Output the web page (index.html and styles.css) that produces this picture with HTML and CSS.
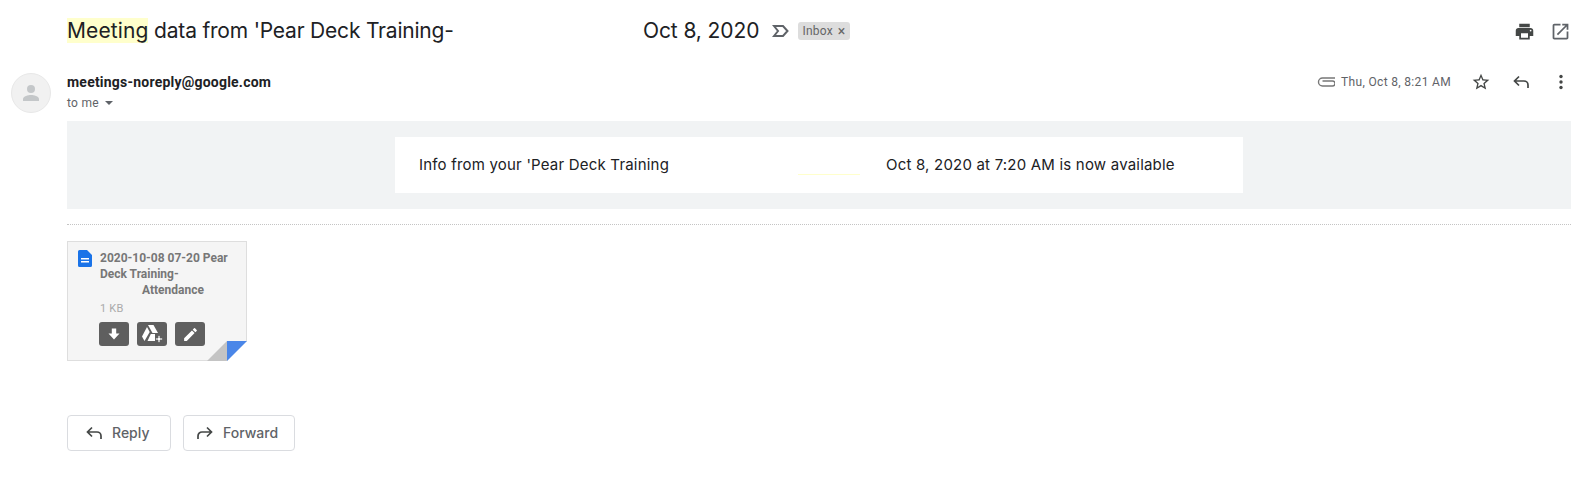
FILE: index.html
```html
<!DOCTYPE html>
<html lang="en">
<head>
<meta charset="utf-8">
<title>Meeting data</title>
<link rel="stylesheet" href="styles.css">
</head>
<body>
<header class="subject">
  <h1 class="subject-text"><mark class="hl">Meeting</mark> data from 'Pear Deck Training-</h1>
  <span class="subject-date">Oct 8, 2020</span>
  <svg class="label-icon" width="18" height="14" viewBox="0 0 18 14"><path d="M2 2h9l4.500 5L11 12H2l4-5z" fill="none" stroke="#5f6368" stroke-width="2"/></svg>
  <span class="chip">Inbox <span class="chip-x">×</span></span>
  <span class="subject-actions">
    <svg width="21" height="21" viewBox="0 0 24 24"><path fill="#444746" d="M19 8H5c-1.660 0-3 1.340-3 3v6h4v4h12v-4h4v-6c0-1.660-1.340-3-3-3zm-3 11H8v-5h8v5zm3-7c-.55 0-1-.45-1-1s.45-1 1-1 1 .45 1 1-.45 1-1 1zm-1-9H6v4h12V3z"/></svg>
    <svg width="21" height="21" viewBox="0 0 24 24"><path fill="#5f6368" d="M19 19H5V5h7V3H5c-1.110 0-2 .9-2 2v14c0 1.100.89 2 2 2h14c1.100 0 2-.9 2-2v-7h-2v7zM14 3v2h3.590l-9.830 9.830 1.410 1.410L19 6.410V10h2V3h-7z"/></svg>
  </span>
</header>

<section class="message">
  <div class="avatar">
    <svg width="24" height="24" viewBox="0 0 24 24"><circle cx="12" cy="8" r="4" fill="#c4c7c9"/><path fill="#c4c7c9" d="M4 20v-2c0-2.700 5.300-4 8-4s8 1.300 8 4v2z"/></svg>
  </div>
  <div class="message-main">
    <div class="meta">
      <div class="sender">
        <div class="sender-name">meetings-noreply@google.com</div>
        <div class="to">to me <span class="caret"></span></div>
      </div>
      <div class="meta-right">
        <svg class="clip" width="18" height="12" viewBox="0 0 18 12"><path d="M18 2H5.500a3.500 3.500 0 0 0 0 8h10a2.500 2.500 0 0 0 0-5H5.500" fill="none" stroke="#777" stroke-width="1.400"/></svg>
        <span class="time">Thu, Oct 8, 8:21 AM</span>
        <svg class="star" width="20" height="20" viewBox="0 0 24 24"><path fill="#444746" d="M22 9.240l-7.190-.62L12 2 9.190 8.630 2 9.240l5.460 4.730L5.820 21 12 17.270 18.180 21l-1.630-7.030L22 9.240zM12 15.400l-3.760 2.270 1-4.280-3.320-2.880 4.380-.38L12 6.100l1.710 4.040 4.380.38-3.320 2.880 1 4.280L12 15.400z"/></svg>
        <svg class="reply" width="20" height="20" viewBox="0 0 20 20"><path d="M8 4.500L3.500 9 8 13.500M3.500 9H13a4 4 0 0 1 4 4v3" fill="none" stroke="#444746" stroke-width="1.700"/></svg>
        <svg class="more" width="4" height="16" viewBox="0 0 4 16"><circle cx="2" cy="2.500" r="1.700" fill="#444746"/><circle cx="2" cy="8" r="1.700" fill="#444746"/><circle cx="2" cy="13.500" r="1.700" fill="#444746"/></svg>
      </div>
    </div>

    <div class="banner">
      <div class="banner-card">
        <span class="banner-a">Info from your 'Pear Deck Training</span>
        <span class="banner-line"></span>
        <span class="banner-b">Oct 8, 2020 at 7:20 AM is now available</span>
      </div>
    </div>

    <div class="divider"></div>

    <div class="attachment">
      <div class="att-head">
        <svg class="doc" width="14" height="17" viewBox="0 0 14 17"><path fill="#1a73e8" d="M1.500 0H9l5 5v10.500a1.500 1.500 0 0 1-1.500 1.500h-11A1.500 1.500 0 0 1 0 15.500V1.500A1.500 1.500 0 0 1 1.500 0z"/><path fill="#fff" d="M3 8h8v1.400H3zM3 11h8v1.400H3z"/></svg>
        <div class="att-title">2020-10-08 07-20 Pear Deck Training-<br><span class="att-indent">Attendance</span></div>
      </div>
      <div class="att-size">1 KB</div>
      <div class="att-btns">
        <span class="att-btn"><svg width="12" height="12" viewBox="0 0 12 12"><path fill="#fff" d="M3.800 .5h4.400v5H11.500L6 11.500 .5 5.500h3.300z"/></svg></span>
        <span class="att-btn"><svg width="24" height="20" viewBox="0 0 24 20"><path fill="#fff" d="M8 1h5.500l4.500 8h-5.500zM7 3l2.700 5L4.500 17 2 12.500zM10.800 10H15v1.500h0V17H7.500z"/><path fill="#fff" d="M18 11.500h2V14h2.500v2H20v2.500h-2V16h-2.500v-2H18z" stroke="#5f5f5f" stroke-width=".8"/></svg></span>
        <span class="att-btn"><svg width="17" height="17" viewBox="0 0 24 24"><path fill="#fff" d="M3 17.250V21h3.750L17.810 9.940l-3.750-3.750L3 17.250zM20.710 7.040a1 1 0 0 0 0-1.410l-2.340-2.340a1 1 0 0 0-1.410 0l-1.830 1.830 3.750 3.750 1.830-1.830z"/></svg></span>
      </div>
      <svg class="fold" width="40" height="20" viewBox="0 0 40 20"><path fill="#fff" d="M40 0v20H20z"/><path fill="#c4c4c4" d="M20 0v20H0z"/><path fill="#4a86e8" d="M20 0h20L20 20z"/></svg>
    </div>

    <div class="actions">
      <span class="action action-reply">
        <svg width="20" height="20" viewBox="0 0 20 20"><path d="M8 4.500L3.500 9 8 13.500M3.500 9H13a4 4 0 0 1 4 4v3" fill="none" stroke="#444746" stroke-width="1.700"/></svg>
        Reply
      </span>
      <span class="action action-forward">
        <svg width="20" height="20" viewBox="0 0 20 20"><path d="M12 4.500L16.500 9 12 13.500M16.500 9H7a4 4 0 0 0-4 4v3" fill="none" stroke="#444746" stroke-width="1.700"/></svg>
        Forward
      </span>
    </div>
  </div>
</section>
</body>
</html>
```

FILE: styles.css
```css
* { box-sizing: border-box; }
html, body { margin: 0; padding: 0; }
body {
  width: 1585px;
  height: 478px;
  background: #fff;
  color: #202124;
  font-family: Roboto, "Liberation Sans", sans-serif;
  overflow: hidden;
}
.subject {
  display: flex;
  align-items: center;
  height: 60px;
  padding: 2px 0 0 67px;
}
.subject-text {
  margin: 0;
  width: 576px;
  font: 400 21px/26px Inter, sans-serif;
  letter-spacing: -.2px;
  white-space: nowrap;
}
.hl { background: #ffffcc; color: inherit; letter-spacing: .1px; }
.subject-date {
  width: 129px;
  font: 400 21px/26px Inter, sans-serif;
  letter-spacing: -.1px;
  white-space: nowrap;
}
.label-icon { margin-right: 8px; }
.chip {
  display: inline-flex;
  align-items: center;
  justify-content: center;
  gap: 5px;
  width: 52px;
  height: 18px;
  background: #dddddd;
  border-radius: 3px;
  color: #666;
  font-size: 12px;
  letter-spacing: .2px;
}
.chip-x { font-size: 14px; line-height: 14px; }
.subject-actions {
  display: flex;
  align-items: center;
  gap: 15px;
  margin-left: auto;
  padding-right: 14px;
}
.message {
  display: flex;
  padding-left: 11px;
}
.avatar {
  flex: none;
  width: 40px;
  height: 40px;
  margin-top: 13px;
  margin-right: 16px;
  border-radius: 50%;
  background: #f1f1f1;
  border: 1px solid #e8e8e8;
  display: flex;
  align-items: center;
  justify-content: center;
}
.message-main {
  width: 1504px;
}
.meta {
  display: flex;
  justify-content: space-between;
  height: 61px;
}
.sender { padding-top: 14px; }
.sender-name {
  font-size: 14px;
  line-height: 17px;
  font-weight: 700;
  letter-spacing: .22px;
  color: #202124;
}
.to {
  margin-top: 5px;
  font-size: 12px;
  line-height: 14px;
  letter-spacing: .25px;
  color: #5f6368;
  display: flex;
  align-items: center;
  gap: 6px;
}
.caret {
  width: 0;
  height: 0;
  border-left: 4px solid transparent;
  border-right: 4px solid transparent;
  border-top: 4px solid #5f6368;
}
.meta-right {
  display: flex;
  align-items: center;
  height: 44px;
}
.clip { margin-right: 6px; }
.time { font-size: 12px; letter-spacing: .33px; color: #5f6368; margin-right: 20px; }
.star { margin-right: 20px; }
.reply { margin-right: 28px; }
.more { margin-right: 8px; }
.banner {
  height: 88px;
  background: #f1f3f4;
  padding: 16px 0 16px 328px;
}
.banner-card {
  position: relative;
  width: 848px;
  height: 56px;
  background: #fff;
  display: flex;
  align-items: center;
  padding-left: 24px;
  font: 400 15px/20px Inter, sans-serif;
  letter-spacing: .2px;
  color: #202124;
}
.banner-a { width: 467px; white-space: nowrap; }
.banner-line {
  position: absolute;
  left: 403px;
  top: 37px;
  width: 62px;
  height: 1px;
  background: #ffffcc;
}
.banner-b { white-space: nowrap; }
.divider {
  margin-top: 15px;
  border-top: 1px dotted #c4c4c4;
  height: 17px;
}
.attachment {
  position: relative;
  width: 180px;
  height: 120px;
  border: 1px solid #dedede;
  background: #f5f5f5;
  padding: 8px 10px 0 10px;
}
.att-head { display: flex; gap: 8px; }
.doc { flex: none; }
.att-title {
  font-size: 12px;
  line-height: 16px;
  font-weight: 700;
  color: #777;
}
.att-indent { padding-left: 42px; }
.att-size {
  margin: 4px 0 0 22px;
  font-size: 11px;
  line-height: 14px;
  letter-spacing: .2px;
  color: #aaa;
}
.att-btns {
  display: flex;
  gap: 8px;
  margin: 6px 0 0 21px;
}
.att-btn {
  width: 30px;
  height: 24px;
  background: #5f5f5f;
  border-radius: 3px;
  display: flex;
  align-items: center;
  justify-content: center;
}
.fold {
  position: absolute;
  right: -1px;
  bottom: -1px;
}
.actions {
  display: flex;
  gap: 12px;
  margin-top: 54px;
}
.action {
  display: flex;
  align-items: center;
  gap: 8px;
  height: 36px;
  border: 1px solid #dadce0;
  border-radius: 4px;
  color: #5f6368;
  font: 500 14px/20px Inter, sans-serif;
  padding-left: 16px;
}
.action-reply { width: 104px; }
.action-forward { width: 112px; padding-left: 11px; }
```
